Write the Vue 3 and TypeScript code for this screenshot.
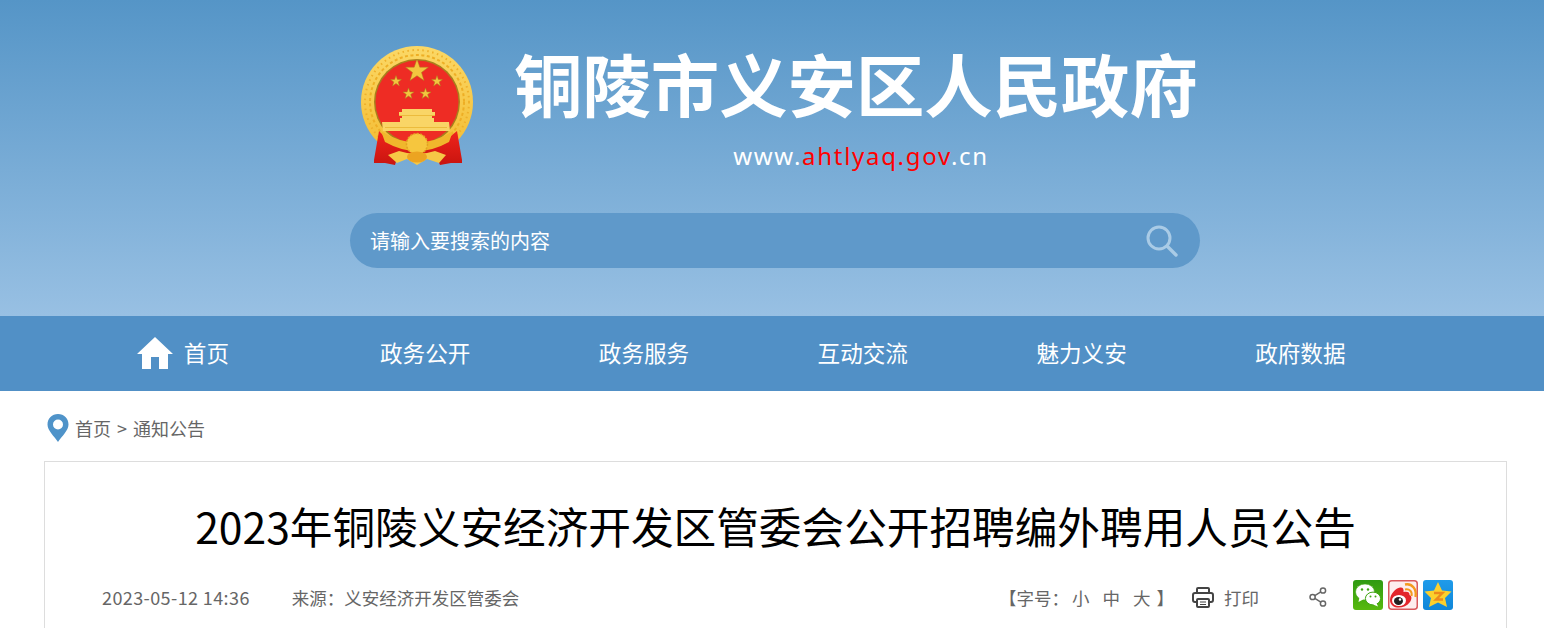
<template>
  <div class="page">
    <header class="banner">
      <div class="banner-inner">
        <div class="brand">
          <svg class="emblem" width="114" height="120" viewBox="0 0 114 120">
            <defs>
              <linearGradient id="ringGold" x1="0" y1="0" x2="0" y2="1">
                <stop offset="0" stop-color="#fbd866" />
                <stop offset="1" stop-color="#f3bb30" />
              </linearGradient>
              <linearGradient id="ribbonRed" x1="0" y1="0" x2="0" y2="1">
                <stop offset="0" stop-color="#f0241c" />
                <stop offset="1" stop-color="#c9140f" />
              </linearGradient>
            </defs>
            <circle cx="56" cy="56" r="56" fill="url(#ringGold)" />
            <circle cx="56" cy="56" r="52" fill="none" stroke="#eeb02a" stroke-width="2" stroke-dasharray="1.5 3.5" />
            <circle cx="56" cy="56" r="47" fill="none" stroke="#eeae25" stroke-width="2" stroke-dasharray="3 2.5" />
            <circle cx="56" cy="56" r="43" fill="#a8801c" />
            <circle cx="56" cy="56" r="41.5" fill="#ee2c24" />
            <g fill="#f3c63f" stroke="#a8801c" stroke-width="0.5">
              <polygon points="56,13 58.8,21.2 67.4,21.2 60.5,26.4 63,34.6 56,29.7 49,34.6 51.5,26.4 44.6,21.2 53.2,21.2" />
              <polygon points="35,29.5 36.4,33.4 40.5,33.4 37.2,35.9 38.4,39.9 35,37.5 31.6,39.9 32.8,35.9 29.5,33.4 33.6,33.4" />
              <polygon points="76,29.5 77.4,33.4 81.5,33.4 78.2,35.9 79.4,39.9 76,37.5 72.6,39.9 73.8,35.9 70.5,33.4 74.6,33.4" />
              <polygon points="47.5,42 48.9,45.9 53,45.9 49.7,48.4 50.9,52.4 47.5,50 44.1,52.4 45.3,48.4 42,45.9 46.1,45.9" />
              <polygon points="64.5,42 65.9,45.9 70,45.9 66.7,48.4 67.9,52.4 64.5,50 61.1,52.4 62.3,48.4 59,45.9 63.1,45.9" />
            </g>
            <path fill="#f9d566" d="M41 63 H71 V66 H74 V69 H71 V72 H73 V76 H88 L89 85 H22 L21 76 H39 V72 H41 V69 H38 V66 H41 Z" />
            <path fill="#ecbb3c" d="M38 69 H74 V70 H38 Z M24 81 H86 V82 H24 Z" />
            <path fill="url(#ribbonRed)" d="M13 114 L18 85 L27 94 Q40 104 56 105 Q72 104 85 94 L96 85 L101 114 L101 117 L90 117 L79 119 L76 112 L36 112 L34 119 L24 117 L13 117 Z" />
            <path fill="#f0b72c" d="M20 85 Q56 108 92 85 L88 96 Q56 114 24 96 Z" />
            <path fill="#f6c846" d="M27 109 L38 105 Q56 111 74 105 L85 109 L78 117 L66 113 L56 119 L46 113 L36 117 Z" />
            <circle cx="56" cy="98" r="10.5" fill="#f6c63e" stroke="#e2a222" stroke-width="1.5" stroke-dasharray="2 1.5" />
            <ellipse cx="56" cy="111" rx="10" ry="5.5" fill="#eca421" />
          </svg>
          <div class="brand-text">
            <h1 class="site-name">铜陵市义安区人民政府</h1>
            <p class="site-url">www.<span class="url-red">ahtlyaq.gov</span>.cn</p>
          </div>
        </div>
        <div class="search">
          <span class="search-text">请输入要搜索的内容</span>
          <svg class="search-icon" width="34" height="34" viewBox="0 0 34 34">
            <circle cx="14" cy="14" r="11" fill="none" stroke="#a9cbe6" stroke-width="3" />
            <path d="M22.5 22.5 L31 31" stroke="#a9cbe6" stroke-width="3.4" stroke-linecap="round" />
          </svg>
        </div>
      </div>
    </header>

    <nav class="nav">
      <a v-for="(item, i) in navItems" :key="item" class="nav-item">
        <svg v-if="i === 0" class="home-icon" width="36" height="32" viewBox="0 0 36 32">
          <path fill="#fff" d="M18 0 L36 17 L31 17 L31 32 L22 32 L22 20 L14 20 L14 32 L5 32 L5 17 L0 17 Z" />
        </svg>
        {{ item }}
      </a>
    </nav>

    <div class="crumbs">
      <svg class="pin" width="22" height="28" viewBox="0 0 22 28">
        <path fill-rule="evenodd" fill="#4f93c9" d="M11 0 C17 0 21.5 4.5 21.5 10.5 C21.5 16.5 15 22 11 28 C7 22 0.5 16.5 0.5 10.5 C0.5 4.5 5 0 11 0 Z M11 5.5 A5 5 0 1 0 11 15.5 A5 5 0 1 0 11 5.5 Z" />
      </svg>
      <span>首页 &gt; 通知公告</span>
    </div>

    <main class="card">
      <h2 class="title">2023年铜陵义安经济开发区管委会公开招聘编外聘用人员公告</h2>
      <div class="meta">
        <span class="date">2023-05-12 14:36</span>
        <span class="source">来源&#xFF1A;义安经济开发区管委会</span>
        <span class="font-size">【字号&#xFF1A;<i>小</i><i>中</i><i>大</i>】</span>
        <span class="print">
          <svg width="22" height="21" viewBox="0 0 22 21" fill="none" stroke="#444" stroke-width="2">
            <path d="M5 6 V2 Q5 1 6 1 H16 Q17 1 17 2 V6" />
            <path d="M5 15 H3 Q1 15 1 13 V8 Q1 6 3 6 H19 Q21 6 21 8 V13 Q21 15 19 15 H17" />
            <rect x="5" y="12" width="12" height="8" rx="1" />
            <path d="M8 15 H14 M8 17.5 H14" stroke-width="1.2" />
          </svg>
          打印
        </span>
        <svg class="share" width="18" height="20" viewBox="0 0 18 20" fill="none" stroke="#666" stroke-width="1.5">
          <circle cx="14" cy="3.5" r="2.6" />
          <circle cx="3.6" cy="10" r="2.6" />
          <circle cx="14" cy="16.5" r="2.6" />
          <path d="M11.8 4.9 L5.8 8.6 M5.8 11.4 L11.8 15.1" />
        </svg>
        <div class="socials">
          <svg width="30" height="30" viewBox="0 0 30 30">
            <defs>
              <linearGradient id="wxBg" x1="0" y1="0" x2="0" y2="1">
                <stop offset="0" stop-color="#2f9a12" />
                <stop offset="1" stop-color="#58b90f" />
              </linearGradient>
            </defs>
            <rect width="30" height="30" rx="3" fill="url(#wxBg)" />
            <ellipse cx="12" cy="12" rx="9.5" ry="8" fill="#fff" stroke="#3fa512" stroke-width="0.6" />
            <path d="M6.5 17 L5.5 22 L11 19 Z" fill="#fff" />
            <ellipse cx="20" cy="18.5" rx="7.6" ry="6.4" fill="#fff" stroke="#3fa512" stroke-width="1" />
            <path d="M23.5 23 L25 26.5 L20 24.5 Z" fill="#fff" />
            <circle cx="9" cy="9.5" r="1.2" fill="#3fa512" />
            <circle cx="15" cy="9.5" r="1.2" fill="#3fa512" />
            <circle cx="17.5" cy="16.5" r="1" fill="#3fa512" />
            <circle cx="22.5" cy="16.5" r="1" fill="#3fa512" />
          </svg>
          <svg width="30" height="30" viewBox="0 0 30 30">
            <rect x="0.75" y="0.75" width="28.5" height="28.5" rx="3" fill="#fdeeee" stroke="#d9595c" stroke-width="1.5" />
            <path fill="#e3262b" d="M2 20 C2 14 8 8 12 7.5 C15 7 16 9 15.5 12 C19 11 22 12 21.5 15 C24 16 24 19 22 22 C19 26 14 28 9 27.5 C5 27 2 24 2 20 Z" />
            <ellipse cx="11" cy="20.5" rx="7" ry="5.5" fill="#fff" />
            <ellipse cx="10.5" cy="21" rx="4.5" ry="4" fill="#222" />
            <circle cx="12" cy="19.5" r="1.2" fill="#fff" />
            <path d="M17 9.5 C21.5 8.5 24.5 11.5 23.5 16" fill="none" stroke="#f39a1e" stroke-width="2" />
            <path d="M17 4.5 C24 3 29 9 27.5 17" fill="none" stroke="#f39a1e" stroke-width="2.4" />
          </svg>
          <svg width="30" height="30" viewBox="0 0 30 30">
            <defs>
              <linearGradient id="qzBg" x1="0" y1="0" x2="0" y2="1">
                <stop offset="0" stop-color="#1f9bea" />
                <stop offset="1" stop-color="#0f86d8" />
              </linearGradient>
            </defs>
            <rect width="30" height="30" rx="3" fill="url(#qzBg)" />
            <polygon points="15,2 19,10.5 28.5,11.5 22,18 24,27 15,22.5 6,27 8,18 1.5,11.5 11,10.5" fill="#fbd02e" />
            <path d="M11 13 H19.5 L13 19.5 H20" fill="none" stroke="#ed8a1c" stroke-width="2.4" />
          </svg>
        </div>
      </div>
    </main>
  </div>
</template>

<script setup lang="ts">
const navItems: string[] = ["首页", "政务公开", "政务服务", "互动交流", "魅力义安", "政府数据"];
</script>

<style>
html,
body {
  margin: 0;
  background: #fff;
  overflow: hidden;
}
</style>

<style scoped>
.page {
  height: 628px;
  overflow: hidden;
  font-family: "Noto Sans CJK SC", "Noto Sans", sans-serif;
  color: #666;
}

.banner {
  height: 316px;
  background: linear-gradient(#5595c7, #98c0e3);
}

.banner-inner {
  width: 850px;
  margin-left: 350px;
  padding-top: 46px;
}

.brand {
  display: flex;
  height: 126px;
  padding-left: 11px;
}

.emblem {
  flex: none;
}

.brand-text {
  margin-left: 39px;
  width: 681px;
  text-align: center;
}

.site-name {
  margin: 0;
  font-size: 68.4px;
  line-height: 74px;
  font-weight: 700;
  color: #fff;
  white-space: nowrap;
}

.site-url {
  margin: 21px 0 0;
  padding-left: 13px;
  font-family: "Noto Sans", sans-serif;
  font-size: 24px;
  line-height: 30px;
  letter-spacing: 1.7px;
  color: #fff;
}

.url-red {
  color: #f00;
}

.search {
  display: flex;
  align-items: center;
  justify-content: space-between;
  height: 55px;
  margin-top: 41px;
  padding: 0 21px 0 20px;
  border-radius: 28px;
  background: #5f99ca;
  color: #fff;
  font-size: 20px;
}

.nav {
  display: grid;
  grid-template-columns: repeat(6, 218.8px);
  height: 75px;
  padding-left: 97px;
  background: #5190c6;
}

.nav-item {
  position: relative;
  display: flex;
  align-items: center;
  justify-content: center;
  padding-bottom: 3px;
  font-size: 22.6px;
  color: #fff;
}

.home-icon {
  position: absolute;
  left: 40px;
  top: 21px;
}

.crumbs {
  display: flex;
  align-items: center;
  height: 66px;
  padding: 4px 0 0 47px;
  gap: 6px;
  font-size: 18px;
  word-spacing: 2px;
  color: #666;
}

.card {
  margin: 0 37px 0 44px;
  height: 300px;
  border: 1px solid #ddd;
  box-sizing: border-box;
}

.title {
  margin: 0;
  padding-top: 33px;
  text-align: center;
  font-size: 42.65px;
  line-height: 62px;
  font-weight: 400;
  color: #000;
  white-space: nowrap;
}

.meta {
  display: flex;
  align-items: center;
  height: 30px;
  margin-top: 25px;
  padding-left: 57px;
  font-size: 17.5px;
}

.date {
  font-size: 18px;
  letter-spacing: 0.4px;
}

.source {
  margin-left: 42px;
}

.font-size {
  margin-left: auto;
}

.font-size i {
  font-style: normal;
  margin-left: 3px;
}

.font-size i + i {
  margin-left: 13px;
}

.font-size i:last-child {
  margin-right: 6px;
}

.print {
  display: flex;
  align-items: center;
  gap: 10px;
  margin-left: 18px;
}

.share {
  margin-left: 50px;
}

.socials {
  display: flex;
  gap: 5px;
  margin: -4px 53px 0 26px;
}
</style>
